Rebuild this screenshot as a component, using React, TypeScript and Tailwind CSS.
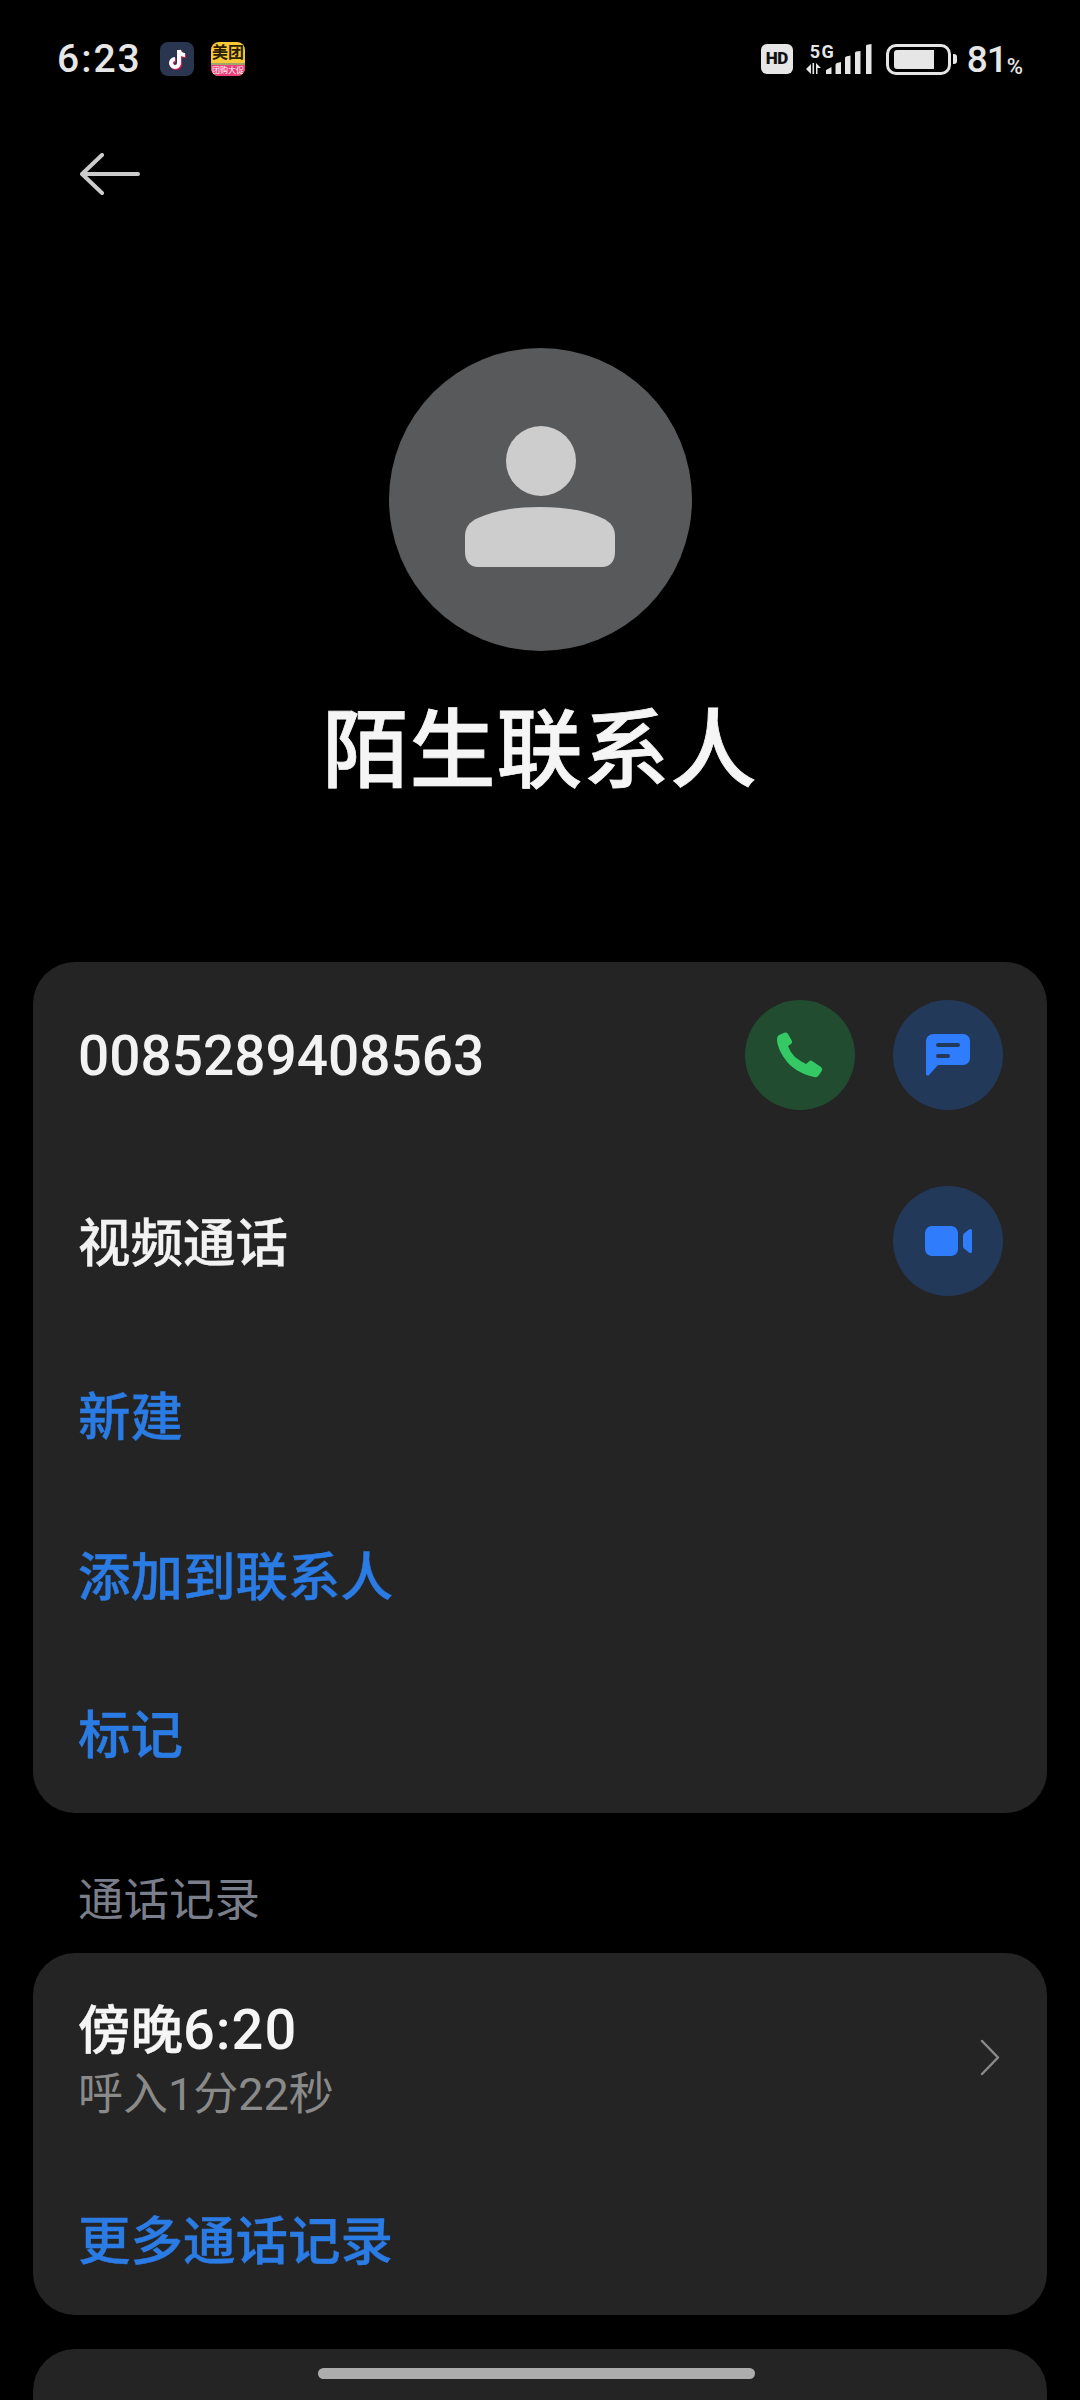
const FONT = "font-['Roboto','Noto_Sans_CJK_SC',sans-serif]";

function SignalBars() {
  return (
    <div className="relative w-[66px] h-[30px]">
      <svg width="66" height="30" viewBox="0 0 66 30" fill="#e6e6e6">
        {/* data arrows */}
        <path d="M0 25l5-5v10zM6.5 19h1.6v11H6.500zM10 19l5 5h-3.500v6H10z" />
        {/* signal strength */}
        <path d="M20 30v-4l5.500-3v7zM29.500 30v-9q0-1.500 1.500-2l4-1v12zM39 30V14q0-1 1-1.500l4.500-1V30zM49 30V9q0-1 1-1.500L54.500 7v23zM60 30V2q0-1 1-1.200L65.500 0v30z" />
      </svg>
      <span className="absolute left-[4px] top-0 text-[18px] leading-[15px] font-bold tracking-[1.5px] text-[#e6e6e6]">5G</span>
    </div>
  );
}

function StatusBar() {
  return (
    <div className="h-[118px] flex items-center justify-between pl-[57px] pr-[57px]">
      <div className="flex items-center">
        <span className="text-[39px] leading-none font-medium tracking-[2px] text-[#e6e6e6] w-[103px]">6:23</span>
        {/* notification app badges */}
        <div className="w-[34px] h-[34px] rounded-[8px] bg-[#2a3550] flex items-center justify-center">
          <svg width="22" height="24" viewBox="0 0 22 24" fill="none">
            <path d="M13 3v13a4 4 0 1 1-4-4M13 3c.5 3 3 5 6 5" stroke="#ee1d52" strokeWidth="4" transform="translate(1 1)" />
            <path d="M13 3v13a4 4 0 1 1-4-4M13 3c.5 3 3 5 6 5" stroke="#ffffff" strokeWidth="4" />
          </svg>
        </div>
        <div className="ml-[17px] w-[34px] h-[34px] rounded-[8px] overflow-hidden flex flex-col bg-[#f9c93c]">
          <span className="h-[21px] text-[16px] leading-[21px] text-center font-bold whitespace-nowrap text-[#2a2000]">美团</span>
          <span className="h-[2px] bg-[#9fa86a]" />
          <span className="h-[11px] bg-[#ec3f7c] text-[8px] leading-[11px] text-center whitespace-nowrap text-white">团购大促</span>
        </div>
      </div>
      <div className="flex items-center">
        <div className="w-[32px] h-[30px] rounded-[6px] bg-[#e6e6e6] flex items-center justify-center text-[17px] font-black tracking-tight text-[#111]">HD</div>
        <div className="ml-[13px]">
          <SignalBars />
        </div>
        <div className="ml-[14px] w-[65px] h-[31px] rounded-[10px] border-[3px] border-[#e6e6e6] p-[3px] pl-[5px]">
          <div className="h-full w-[40px] bg-[#e6e6e6] rounded-l-[3px]" />
        </div>
        <div className="ml-[2px] w-[4px] h-[10px] rounded-r-[3px] bg-[#e6e6e6]" />
        <span className="ml-[10px] text-[37px] leading-none font-medium tracking-[-1px] text-[#e6e6e6]">81</span>
        <span className="text-[22px] leading-none font-medium text-[#e6e6e6] self-end">%</span>
      </div>
    </div>
  );
}

function ActionButton({ tone, children }: { tone: 'green' | 'blue'; children: React.ReactNode }) {
  return (
    <div
      className={
        tone === 'green'
          ? 'w-[110px] h-[110px] rounded-full bg-[#214c30] flex items-center justify-center'
          : 'w-[110px] h-[110px] rounded-full bg-[#23395a] flex items-center justify-center'
      }
    >
      {children}
    </div>
  );
}

function LinkRow({ label, last }: { label: string; last?: boolean }) {
  return (
    <div className={last ? 'h-[156px] pt-[6px] flex items-center' : 'h-[160px] pt-[6px] flex items-center'}>
      <span className="text-[52.5px] leading-none font-medium [-webkit-text-stroke:0.4px_#2b7be4] text-[#2b7be4]">{label}</span>
    </div>
  );
}

export default function App() {
  return (
    <div className={`relative w-[1080px] h-[2400px] overflow-hidden bg-black ${FONT}`}>
      <StatusBar />

      <div className="ml-[80px] mt-[35px]">
        <svg width="60" height="42" viewBox="0 0 60 42" fill="none" stroke="#cccccc" strokeWidth="4" strokeLinecap="round" strokeLinejoin="round">
          <path d="M58 21H2M22 2L2 21l20 19" />
        </svg>
      </div>

      <div className="mt-[153px] mx-auto w-[303px] h-[303px] rounded-full bg-[#58595b] flex items-center justify-center">
        <svg width="150" height="150" viewBox="0 0 150 150" fill="#cdcdcd">
          <circle cx="76" cy="36" r="35" />
          <path d="M0 111c0-8 4-14 13-18 18-8 38-11 62-11s44 3 62 11c9 4 13 10 13 18v16c0 9-5 15-13 15H13C5 142 0 136 0 127z" />
        </svg>
      </div>

      <h1 className="mt-[51px] h-[100px] text-center text-[86px] leading-[100px] font-medium tracking-[1px] [-webkit-text-stroke:0.8px_#f5f5f5] text-[#f5f5f5]">陌生联系人</h1>

      <div className="mt-[160px] mx-[33px] h-[851px] rounded-[42px] bg-[#242424] pl-[45px] pr-[44px] pt-[38px]">
        <div className="flex items-center justify-between">
          <span className="pt-[3px] text-[55px] leading-none font-medium text-[#f2f2f2]">0085289408563</span>
          <div className="flex gap-[38px]">
            <ActionButton tone="green">
              <svg width="46" height="46" viewBox="0 0 46 46" fill="#34c964">
                <path d="M2 3L8 .5Q10 0 11 2L15 9Q15.500 11 14 12L11 14Q13 20 18 25Q23 29 29 32L32 29.500Q33.500 28 35 29L44 35Q46 36.500 45 38.500L42 43Q40 46 37 45C24 42 14 36 8 27C3 20 0 13 0 7Q0 4 2 3Z" />
              </svg>
            </ActionButton>
            <ActionButton tone="blue">
              <svg width="44" height="42" viewBox="0 0 44 42" fill="#2f7dfc">
                <path d="M8 0h29c4 0 7 3 7 7v17c0 4-3 7-7 7H12L3 41c-1 1-3 .5-3-1V8c0-5 3-8 8-8z" />
                <rect x="10" y="9" width="24" height="4" rx="2" fill="#23395a" />
                <rect x="10" y="20" width="14" height="4" rx="2" fill="#23395a" />
              </svg>
            </ActionButton>
          </div>
        </div>

        <div className="mt-[76px] flex items-center justify-between">
          <span className="pt-[6px] text-[52.5px] leading-none font-medium [-webkit-text-stroke:0.4px_#f2f2f2] text-[#f2f2f2]">视频通话</span>
          <ActionButton tone="blue">
            <svg width="47" height="30" viewBox="0 0 47 30" fill="#2f7dfc">
              <rect x="0" y="0" width="33" height="30" rx="7" />
              <path d="M38 10q0-1.500 1-2.500l5-4q3-1.500 3 1.500v20q0 3-3 1.500l-5-4q-1-1-1-2.500z" />
            </svg>
          </ActionButton>
        </div>

        <div className="mt-[39px]">
          <LinkRow label="新建" />
          <LinkRow label="添加到联系人" />
          <LinkRow label="标记" last />
        </div>
      </div>

      <div className="mt-[61px] ml-[78px] h-[54px] flex items-center text-[45.5px] leading-none text-[#7a7d8a]">通话记录</div>

      <div className="mt-[25px] mx-[33px] h-[362px] rounded-[42px] bg-[#242424] pl-[45px] pr-[47px]">
        <div className="pt-[47px] flex items-center justify-between">
          <div>
            <div className="h-[60px] text-[52.5px] leading-[60px] font-medium [-webkit-text-stroke:0.4px_#f5f5f5] text-[#f5f5f5]">
              傍晚<span className="text-[56px] tracking-[1px] [-webkit-text-stroke:0px]">6:20</span>
            </div>
            <div className="mt-[5px] h-[60px] text-[45px] leading-[60px] text-[#8a8a8a]">呼入1分22秒</div>
          </div>
          <svg width="20" height="37" viewBox="0 0 20 37" fill="none" stroke="#8a8a8a" strokeWidth="2.500" strokeLinecap="round" strokeLinejoin="round" className="mb-[10px]">
            <path d="M2 2l16 16.500L2 35" />
          </svg>
        </div>
        <div className="mt-[87px] text-[52.5px] leading-[60px] font-medium [-webkit-text-stroke:0.4px_#2b7be4] text-[#2b7be4]">更多通话记录</div>
      </div>

      <div className="mt-[34px] mx-[33px] h-[120px] rounded-t-[42px] bg-[#242424]" />

      <div className="absolute left-[318px] top-[2368px] w-[437px] h-[11px] rounded-full bg-[#adadad]" />
    </div>
  );
}
